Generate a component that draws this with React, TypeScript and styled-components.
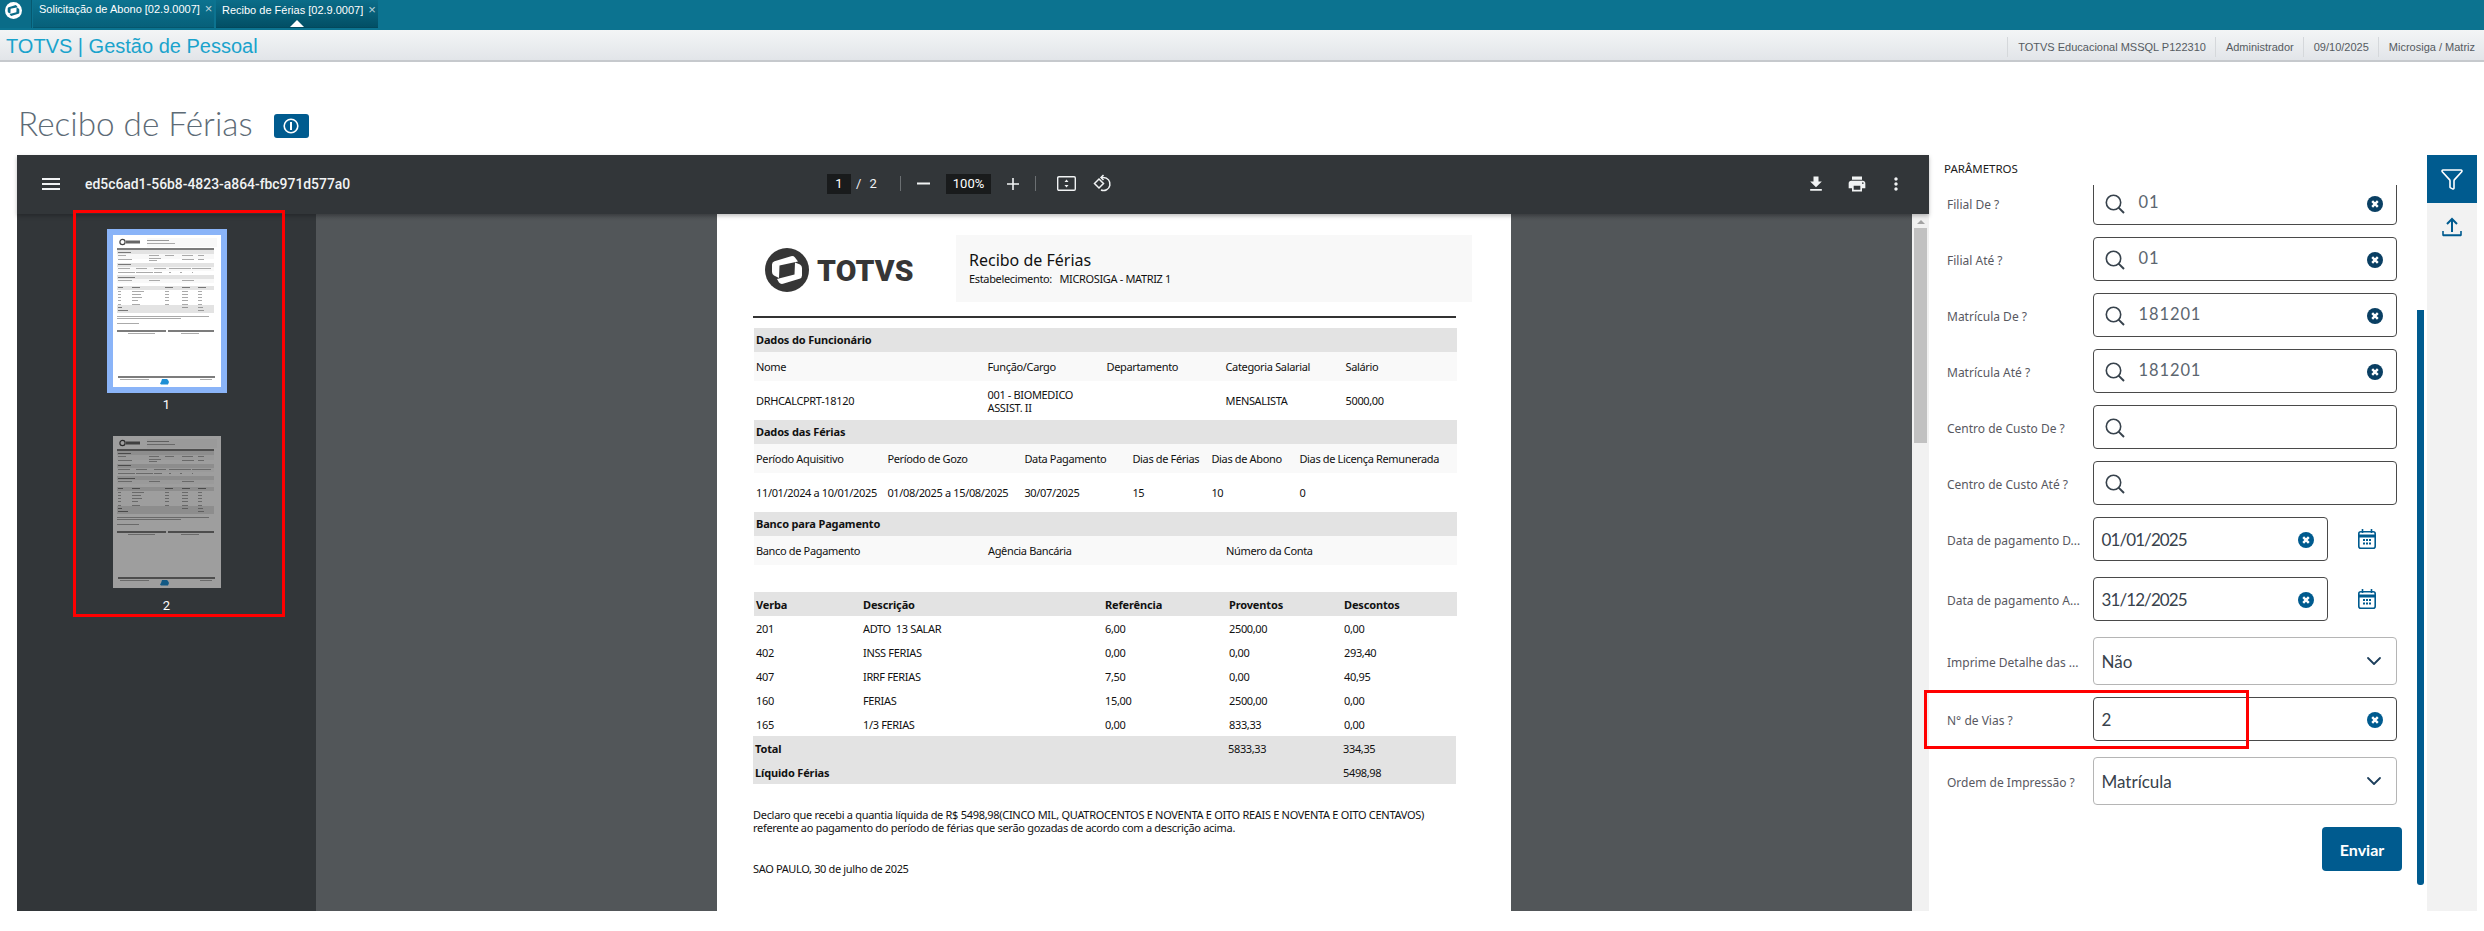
import React from "react";
import styled, { createGlobalStyle } from "styled-components";
import { ChevronDown, Filter } from "lucide-react";

const Global = createGlobalStyle`
  html, body { margin: 0; padding: 0; background: #fff; overflow: hidden; }
  * { box-sizing: border-box; }
  body { font-family: "Liberation Sans", Arial, sans-serif; width: 2484px; height: 931px; }
`;

const Root = styled.div`
  position: relative;
  width: 2484px;
  height: 931px;
  overflow: hidden;
  background: #fff;
`;

const TopBar = styled.div`
  height: 30px;
  background: #0c7390;
  display: flex;
  align-items: flex-start;
`;
const LogoCell = styled.div`
  width: 32px;
  height: 28px;
  display: flex;
  align-items: flex-start;
  padding: 2px 0 0 5px;
  background: #0a6c88;
  border-right: 1px solid #07586f;
  margin-right: 1px;
`;
const Tab = styled.div<{ $active?: boolean }>`
  position: relative;
  height: 28px;
  width: ${(p) => (p.$active ? 162 : 181)}px;
  margin-right: 2px;
  padding: ${(p) => (p.$active ? "3px 0 0 6px" : "2px 0 0 6px")};
  display: flex;
  white-space: nowrap;
  color: #fff;
  font-size: 11px;
  line-height: 14px;
  background: ${(p) =>
    p.$active ? "linear-gradient(#0b6d89, #024f65)" : "linear-gradient(#0c7390, #07607a)"};
  border-bottom: 1px solid ${(p) => (p.$active ? "#02485c" : "#05566d")};
`;
const TabClose = styled.span`
  color: #b9d3db;
  font-size: 13px;
  margin-left: 5px;
  line-height: 13px;
`;
const TabCaret = styled.span`
  position: absolute;
  left: 74px;
  bottom: 0;
  width: 0;
  height: 0;
  border-left: 7px solid transparent;
  border-right: 7px solid transparent;
  border-bottom: 7px solid #fff;
`;

const Header = styled.div`
  height: 32px;
  display: flex;
  justify-content: space-between;
  background: linear-gradient(#f3f5f6, #e2e5e9);
  border-bottom: 2px solid #c6c9cd;
`;
const Brand = styled.div`
  padding-left: 6px;
  font-size: 20px;
  line-height: 32px;
  color: #1aa3cc;
`;
const Meta = styled.div`
  display: flex;
  align-items: stretch;
  padding-top: 7px;
  padding-bottom: 3px;
  height: 30px;
`;
const MetaItem = styled.div`
  padding: 0 9px 0 10px;
  border-left: 1px solid #d5d8db;
  font-size: 11px;
  line-height: 20px;
  color: #555b61;
`;

const TitleRow = styled.div`
  height: 93px;
  display: flex;
  align-items: center;
  padding: 28px 0 0 18px;
`;
const Title = styled.h1`
  margin: 0;
  font-family: Lato, "Liberation Sans", sans-serif;
  font-weight: 300;
  font-size: 33.3px;
  color: #5d6b76;
  line-height: 40px;
`;
const InfoButton = styled.div`
  width: 35px;
  height: 24px;
  margin: 7px 0 0 21px;
  border-radius: 3px;
  background: #005b8f;
  display: flex;
  align-items: center;
  justify-content: center;
`;

const Content = styled.div`
  height: 756px;
  display: flex;
  padding-left: 17px;
`;

const Viewer = styled.div`
  width: 1912px;
  display: flex;
  flex-direction: column;
  background: #525659;
`;
const Toolbar = styled.div`
  position: relative;
  z-index: 2;
  height: 59px;
  padding-bottom: 2px;
  background: #323639;
  color: #f1f3f4;
  display: flex;
  align-items: center;
  font-family: Roboto, sans-serif;
  box-shadow: 0 2px 4px rgba(0, 0, 0, 0.25);
`;
const IconSlot = styled.span<{ $w: number; $ml?: number }>`
  width: ${(p) => p.$w}px;
  margin-left: ${(p) => p.$ml ?? 0}px;
  display: flex;
  justify-content: center;
  align-items: center;
  flex: none;
`;
const FileName = styled.div`
  width: 442px;
  margin-left: 22px;
  margin-right: 300px;
  font-size: 13.9px;
  font-weight: 500;
  flex: none;
`;
const NumberBox = styled.div<{ $w: number; $ml?: number }>`
  width: ${(p) => p.$w}px;
  margin-left: ${(p) => p.$ml ?? 0}px;
  height: 20px;
  flex: none;
  background: #191b1c;
  color: #fff;
  font-size: 13px;
  line-height: 20px;
  text-align: center;
`;
const PageSep = styled.span`
  font-size: 13px;
  width: 49px;
  padding-left: 5px;
  flex: none;
  word-spacing: 5px;
`;
const ToolSep = styled.span<{ $ml: number }>`
  width: 1px;
  height: 15px;
  background: #6b6f72;
  margin-left: ${(p) => p.$ml}px;
  flex: none;
`;

const ViewerBody = styled.div`
  flex: 1;
  display: flex;
  min-height: 0;
`;
const Thumbs = styled.div`
  width: 299px;
  flex: none;
  background: #323639;
  padding-top: 15px;
  display: flex;
  flex-direction: column;
  align-items: center;
`;
const ThumbItem = styled.div`
  display: flex;
  flex-direction: column;
  align-items: center;
  height: 207px;
  color: #fff;
  font-family: Roboto, sans-serif;
  font-size: 13px;
`;
const ThumbFrame = styled.div<{ $selected?: boolean; $dim?: boolean }>`
  width: ${(p) => (p.$selected ? 120 : 108)}px;
  height: ${(p) => (p.$selected ? 164 : 152)}px;
  border: ${(p) => (p.$selected ? "6px solid #8ab4f8" : "none")};
  display: flex;
  filter: ${(p) => (p.$dim ? "brightness(0.62)" : "none")};
`;
const ThumbLabel = styled.div<{ $selected?: boolean }>`
  margin-top: ${(p) => (p.$selected ? 4 : 10)}px;
  line-height: 16px;
`;

const Main = styled.div`
  flex: 1;
  min-width: 0;
  display: flex;
  justify-content: center;
  overflow: hidden;
  background: linear-gradient(#4c5053, #525659 6px);
`;
const Page = styled.div`
  width: 794px;
  flex: none;
  height: 697px;
  background: #fff;
  padding: 21px 0 0 36px;
  font-family: "Noto Sans", Tahoma, sans-serif;
  font-size: 11px;
  letter-spacing: -0.35px;
  color: #111;
  overflow: hidden;
`;
const DocHead = styled.div`
  display: flex;
  height: 67px;
`;
const Logo = styled.div`
  width: 203px;
  flex: none;
  display: flex;
  align-items: center;
  gap: 8px;
  padding: 0 0 0 12px;
  margin-top: 3px;
`;
const LogoText = styled.span`
  font-family: Roboto, sans-serif;
  font-weight: 900;
  font-size: 30px;
  color: #363636;
  letter-spacing: 0.2px;
`;
const DocTitleBox = styled.div`
  width: 516px;
  flex: none;
  background: #f8f8f8;
  padding: 15px 0 0 13px;
`;
const DocTitle = styled.div`
  font-size: 16px;
  letter-spacing: 0;
  line-height: 21px;
`;
const DocSub = styled.div`
  font-size: 11px;
  line-height: 15px;
  white-space: pre;
`;
const Rule = styled.div`
  width: 703px;
  height: 2px;
  background: #333;
  margin-top: 14px;
  margin-bottom: 10px;
`;
const SectionTitle = styled.div`
  width: 703px;
  margin-left: 1px;
  height: 24px;
  background: #e3e3e3;
  font-weight: 700;
  letter-spacing: -0.15px;
  line-height: 24px;
  padding-left: 2px;
`;
const DataRow = styled.div<{ $cols: string; $h: number; $tinted?: boolean }>`
  width: 703px;
  margin-left: 1px;
  height: ${(p) => p.$h}px;
  display: grid;
  grid-template-columns: ${(p) => p.$cols};
  align-items: center;
  background: ${(p) => (p.$tinted ? "#f9f9f9" : "#fff")};
  padding-left: 2px;
  line-height: 13px;
  white-space: pre;
`;
const PayRow = styled(DataRow)<{ $gray?: boolean; $flush?: boolean }>`
  background: ${(p) => (p.$gray ? "#e3e3e3" : "#fff")};
  margin-left: ${(p) => (p.$flush ? 0 : 1)}px;
`;
const Strong = styled.span`
  font-weight: 700;
  letter-spacing: -0.15px;
`;
const Spacer = styled.div<{ $h: number }>`
  height: ${(p) => p.$h}px;
`;
const Paragraph = styled.p`
  margin: 24px 0 0 0;
  line-height: 13px;
  white-space: nowrap;
  letter-spacing: -0.3px;
`;
const Place = styled.p`
  margin: 28px 0 0 0;
  line-height: 13px;
`;

const VScroll = styled.div`
  width: 17px;
  flex: none;
  background: #f1f1f1;
  padding: 0 2px;
`;
const VArrow = styled.div`
  width: 0;
  height: 0;
  margin: 6px auto 4px;
  border-left: 4px solid transparent;
  border-right: 4px solid transparent;
  border-bottom: 4px solid #a3a3a3;
`;
const VThumb = styled.div`
  height: 215px;
  background: #c1c1c1;
`;

const Panel = styled.div`
  position: relative;
  width: 498px;
  flex: none;
  display: flex;
  flex-direction: column;
`;
const PanelTitle = styled.div`
  height: 30px;
  padding: 6px 0 0 15px;
  font-family: "Noto Sans", sans-serif;
  font-size: 11.5px;
  line-height: 16px;
  color: #1c1c1c;
`;
const FormClip = styled.div`
  flex: 1;
  overflow: hidden;
  padding-left: 18px;
`;
const FormList = styled.div`
  margin-top: -4px;
  display: flex;
  flex-direction: column;
`;
const Row = styled.div<{ $mb: number }>`
  display: flex;
  align-items: center;
  margin-bottom: ${(p) => p.$mb}px;
`;
const Label = styled.label`
  width: 145.5px;
  flex: none;
  padding-top: 2px;
  font-family: "Noto Sans", sans-serif;
  font-size: 12px;
  color: #58585f;
  white-space: nowrap;
  overflow: hidden;
`;
const Field = styled.div<{ $w?: number; $h?: number; $light?: boolean }>`
  width: ${(p) => p.$w ?? 304}px;
  height: ${(p) => p.$h ?? 44}px;
  flex: none;
  border: 1px solid ${(p) => (p.$light ? "#b5b5b5" : "#4a4a4a")};
  border-radius: 4px;
  display: flex;
  align-items: center;
  padding: 0 13px 0 8px;
  background: #fff;
`;
const FieldIcon = styled.span`
  width: 20px;
  height: 20px;
  margin: 1px 14px 0 3px;
  flex: none;
  display: flex;
`;
const LookupValue = styled.span`
  flex: 1;
  font-family: Lato, sans-serif;
  font-size: 16.5px;
  letter-spacing: 0.9px;
  color: #5c6670;
  margin-top: -2px;
`;
const Value = styled.span<{ $tight?: boolean }>`
  flex: 1;
  font-family: Lato, sans-serif;
  font-size: 17px;
  letter-spacing: ${(p) => (p.$tight ? "-0.9px" : "0")};
  color: #38424c;
`;
const ClearSlot = styled.span`
  display: flex;
  margin-top: 2px;
`;
const CalendarSlot = styled.span`
  width: 18px;
  height: 20px;
  margin-left: 30px;
  display: flex;
`;
const SubmitRow = styled.div`
  display: flex;
  justify-content: flex-end;
  width: 455px;
  margin-top: 10px;
`;
const Submit = styled.button`
  width: 80px;
  height: 44px;
  border: 0;
  border-radius: 4px;
  background: #005b8f;
  color: #fff;
  font-family: Lato, sans-serif;
  font-weight: 700;
  font-size: 16px;
`;
const PanelScroll = styled.div`
  position: absolute;
  left: 488px;
  top: 155px;
  width: 7px;
  height: 575px;
  background: #005b8f;
  border-radius: 0 0 3px 3px;
`;

const Side = styled.div`
  width: 50px;
  flex: none;
  background: #f2f2f2;
`;
const SideBtn = styled.div<{ $active?: boolean }>`
  height: 48px;
  display: flex;
  align-items: center;
  justify-content: center;
  background: ${(p) => (p.$active ? "#005b8f" : "transparent")};
  color: ${(p) => (p.$active ? "#fff" : "#005b8f")};
`;

const RedBox = styled.div<{ $l: number; $t: number; $w: number; $h: number }>`
  position: absolute;
  left: ${(p) => p.$l}px;
  top: ${(p) => p.$t}px;
  width: ${(p) => p.$w}px;
  height: ${(p) => p.$h}px;
  border: 3px solid #f00;
  pointer-events: none;
  z-index: 5;
`;

/* ---------- drawings ---------- */
const Mat = ({ d, size = 24 }: { d: string; size?: number }) => (
  <svg width={size} height={size} viewBox="0 0 24 24" fill="#f1f3f4">
    <path d={d} />
  </svg>
);

const TotvsMark = ({ size, color, hole }: { size: number; color: string; hole: string }) => (
  <svg width={size} height={size} viewBox="0 0 44 44">
    <circle cx="22" cy="22" r="22" fill={color} />
    <path
      fill={hole}
      d="M7 16.5Q7 14 9.5 13.3L26 8.2Q28.5 7.6 30 9.5L33 13.5 14.5 17.5 14 30 9 27.5Q7 26.3 7 24Z"
    />
    <path
      fill={hole}
      d="M37 27.5Q37 30 34.5 30.7L18 35.8Q15.5 36.4 14 34.5L12 31 29.5 26.5 30 14.5 35 16.5Q37 17.7 37 20Z"
    />
  </svg>
);

const SearchIcon = () => (
  <svg width="20" height="20" viewBox="0 0 20 20" fill="none" stroke="#37424c" strokeWidth="1.6">
    <circle cx="8.5" cy="8.5" r="7.2" />
    <path d="M13.6 13.6 19 19" strokeWidth="2" />
  </svg>
);
const ClearIcon = ({ dark }: { dark?: boolean }) => (
  <ClearSlot>
    <svg width="16" height="16" viewBox="0 0 16 16">
      <circle cx="8" cy="8" r="8" fill={dark ? "#0a3f63" : "#005b8f"} />
      <path d="M5.2 5.2 10.8 10.8M10.8 5.2 5.2 10.8" stroke="#fff" strokeWidth="2.4" />
    </svg>
  </ClearSlot>
);
const CalendarIcon = () => (
  <svg width="18" height="20" viewBox="0 0 18 20" fill="none">
    <rect x="0.8" y="2.8" width="16.4" height="16.4" rx="2" stroke="#005b8f" strokeWidth="1.6" />
    <path d="M1 7h16" stroke="#005b8f" strokeWidth="3" />
    <path d="M4.5 0v4M13.5 0v4" stroke="#005b8f" strokeWidth="1.6" />
    <path
      d="M5 10h2v2H5zM8 10h2v2H8zM11 10h2v2h-2zM5 13.500h2v2H5zM8 13.500h2v2H8zM11 13.500h2v2h-2z"
      fill="#005b8f"
    />
  </svg>
);
const UploadIcon = () => (
  <svg width="20" height="20" viewBox="0 0 20 20" fill="none" stroke="#005b8f" strokeWidth="2">
    <path d="M1 14v4h18v-4M1 18.500h18" strokeWidth="1.6" />
    <path d="M10 15V2M5 7l5-5 5 5" />
  </svg>
);

type Bar = [number, number, number, number, string];
const barRows: Bar[] = [
  [34, 3, 70, 9, "#f8f8f8"],
  [34, 5, 22, 1, "#999"],
  [34, 8, 28, 1, "#aaa"],
  [13, 5.500, 14, 3, "#666"],
  [4, 13, 97, 2, "#7c7c7c"],
  [4, 15, 97, 4, "#e3e3e3"],
  [5, 17, 13, 1, "#777"],
  [4, 19, 97, 5, "#f8f8f8"],
  [5, 20, 8, 1, "#aaa"], [36, 20, 10, 1, "#aaa"], [52, 20, 9, 1, "#aaa"], [69, 20, 11, 1, "#aaa"], [85, 20, 6, 1, "#aaa"],
  [5, 24, 14, 1, "#aaa"], [36, 23, 12, 1, "#aaa"], [36, 25, 8, 1, "#aaa"], [69, 24, 12, 1, "#aaa"], [85, 24, 6, 1, "#aaa"],
  [4, 28, 97, 4, "#e3e3e3"],
  [5, 29, 13, 1, "#777"],
  [4, 32, 97, 4, "#f8f8f8"],
  [5, 33, 12, 1, "#aaa"], [23, 33, 11, 1, "#aaa"], [41, 33, 12, 1, "#aaa"], [56, 33, 11, 1, "#aaa"], [67, 33, 11, 1, "#aaa"], [79, 33, 19, 1, "#aaa"],
  [5, 37, 17, 1, "#aaa"], [23, 37, 17, 1, "#aaa"], [41, 37, 8, 1, "#aaa"], [56, 37, 2, 1, "#aaa"], [67, 37, 2, 1, "#aaa"], [79, 37, 1, 1, "#aaa"],
  [4, 40, 97, 4, "#e3e3e3"],
  [5, 42, 17, 1, "#777"],
  [4, 44, 97, 4, "#f8f8f8"],
  [5, 45, 14, 1, "#aaa"], [36, 45, 11, 1, "#aaa"], [69, 45, 12, 1, "#aaa"],
  [4, 51, 97, 4, "#e3e3e3"],
  [5, 52, 5, 1, "#777"], [19, 52, 8, 1, "#777"], [52, 52, 8, 1, "#777"], [69, 52, 8, 1, "#777"], [85, 52, 8, 1, "#777"],
  ...[56, 59, 62, 65, 69].flatMap((y, i): Bar[] => [
    [5, y, 3, 1, "#aaa"],
    [19, y, [12, 9, 10, 6, 8][i], 1, "#aaa"],
    [52, y, 4, 1, "#aaa"],
    [69, y, 6, 1, "#aaa"],
    [85, y, 4, 1, "#aaa"],
  ]),
  [4, 70, 97, 8, "#e3e3e3"],
  [5, 72, 4, 1, "#777"], [69, 72, 6, 1, "#999"], [85, 72, 5, 1, "#999"], [5, 75, 10, 1, "#777"], [85, 75, 6, 1, "#999"],
  [4, 81, 92, 1, "#aaa"], [4, 83, 64, 1, "#aaa"], [4, 88, 22, 1, "#aaa"],
  [4, 95, 49, 2, "#7c7c7c"], [55, 95, 46, 2, "#7c7c7c"],
  [15, 98, 27, 1, "#aaa"], [68, 98, 18, 1, "#aaa"],
  [5, 141, 97, 2, "#7c7c7c"],
  [7, 144, 29, 1, "#aaa"], [87, 144, 12, 1, "#aaa"],
];

const MiniPage = () => (
  <svg width="108" height="152" viewBox="0 0 108 152">
    <rect width="108" height="152" fill="#fff" />
    {barRows.map(([x, y, w, h, c], i) => (
      <rect key={i} x={x} y={y} width={w} height={h} fill={c} />
    ))}
    <circle cx="9.500" cy="7" r="2.600" fill="none" stroke="#444" strokeWidth="1.200" />
    <path d="M49 144h5l1 1 1 2-1 2.500h-7l-1-1 1-1.500z" fill="#1e8fd5" />
  </svg>
);

/* ---------- data ---------- */
const empCols = "231.5px 119px 119px 120px 1fr";
const ferCols = "131.4px 137px 108px 79px 88px 1fr";
const bankCols = "232px 238px 1fr";
const payCols = "107px 242px 124px 115px 1fr";

const pay = [
  ["201", "ADTO  13 SALAR", "6,00", "2500,00", "0,00"],
  ["402", "INSS FERIAS", "0,00", "0,00", "293,40"],
  ["407", "IRRF FERIAS", "7,50", "0,00", "40,95"],
  ["160", "FERIAS", "15,00", "2500,00", "0,00"],
  ["165", "1/3 FERIAS", "0,00", "833,33", "0,00"],
];

type FieldDef =
  | { kind: "lookup"; label: string; value?: string; mb: number }
  | { kind: "date"; label: string; value: string; mb: number }
  | { kind: "select"; label: string; value: string; mb: number }
  | { kind: "text"; label: string; value: string; mb: number };

const fields: FieldDef[] = [
  { kind: "lookup", label: "Filial De ?", value: "01", mb: 12 },
  { kind: "lookup", label: "Filial Até ?", value: "01", mb: 12 },
  { kind: "lookup", label: "Matrícula De ?", value: "181201", mb: 12 },
  { kind: "lookup", label: "Matrícula Até ?", value: "181201", mb: 12 },
  { kind: "lookup", label: "Centro de Custo De ?", mb: 12 },
  { kind: "lookup", label: "Centro de Custo Até ?", mb: 12 },
  { kind: "date", label: "Data de pagamento D...", value: "01/01/2025", mb: 16 },
  { kind: "date", label: "Data de pagamento A...", value: "31/12/2025", mb: 16 },
  { kind: "select", label: "Imprime Detalhe das ...", value: "Não", mb: 12 },
  { kind: "text", label: "N° de Vias ?", value: "2", mb: 16 },
  { kind: "select", label: "Ordem de Impressão ?", value: "Matrícula", mb: 12 },
];

const renderField = (f: FieldDef) => {
  if (f.kind === "lookup") {
    return (
      <Field>
        <FieldIcon><SearchIcon /></FieldIcon>
        <LookupValue>{f.value}</LookupValue>
        {f.value && <ClearIcon dark />}
      </Field>
    );
  }
  if (f.kind === "date") {
    return (
      <>
        <Field $w={235}>
          <Value $tight>{f.value}</Value>
          <ClearIcon />
        </Field>
        <CalendarSlot><CalendarIcon /></CalendarSlot>
      </>
    );
  }
  if (f.kind === "select") {
    return (
      <Field $h={48} $light>
        <Value>{f.value}</Value>
        <ChevronDown size={24} color="#1d3f5c" strokeWidth={1.8} style={{ marginRight: -3 }} />
      </Field>
    );
  }
  return (
    <Field>
      <Value>{f.value}</Value>
      <ClearIcon />
    </Field>
  );
};

export default function App() {
  return (
    <Root>
      <Global />
      <TopBar>
        <LogoCell><TotvsMark size={17} color="#fff" hole="#0a6c88" /></LogoCell>
        <Tab>Solicitação de Abono [02.9.0007]<TabClose>×</TabClose></Tab>
        <Tab $active>Recibo de Férias [02.9.0007]<TabClose>×</TabClose><TabCaret /></Tab>
      </TopBar>
      <Header>
        <Brand>TOTVS | Gestão de Pessoal</Brand>
        <Meta>
          <MetaItem>TOTVS Educacional MSSQL P122310</MetaItem>
          <MetaItem>Administrador</MetaItem>
          <MetaItem>09/10/2025</MetaItem>
          <MetaItem>Microsiga / Matriz</MetaItem>
        </Meta>
      </Header>
      <TitleRow>
        <Title>Recibo de Férias</Title>
        <InfoButton>
          <svg width="16" height="16" viewBox="0 0 16 16">
            <circle cx="8" cy="8" r="6.8" fill="none" stroke="#fff" strokeWidth="1.6" />
            <path d="M8 4v8" stroke="#fff" strokeWidth="2" />
          </svg>
        </InfoButton>
      </TitleRow>
      <Content>
        <Viewer>
          <Toolbar>
            <IconSlot $w={24} $ml={22}>
              <Mat size={24} d="M3 18h18v-2H3v2zm0-5h18v-2H3v2zm0-7v2h18V6H3z" />
            </IconSlot>
            <FileName>ed5c6ad1-56b8-4823-a864-fbc971d577a0</FileName>
            <NumberBox $w={24}>1</NumberBox>
            <PageSep>/ 2</PageSep>
            <ToolSep $ml={0} />
            <IconSlot $w={13} $ml={16}>
              <svg width="13" height="3" viewBox="0 0 13 3"><rect width="13" height="2" y="0.500" fill="#f1f3f4" /></svg>
            </IconSlot>
            <NumberBox $w={45} $ml={16}>100%</NumberBox>
            <IconSlot $w={12} $ml={16}>
              <svg width="12" height="12" viewBox="0 0 12 12"><path d="M0 6h12M6 0v12" stroke="#f1f3f4" strokeWidth="1.6" /></svg>
            </IconSlot>
            <ToolSep $ml={16} />
            <IconSlot $w={19} $ml={21}>
              <svg width="19" height="15" viewBox="0 0 19 15">
                <rect x="0.700" y="0.700" width="17.600" height="13.600" rx="1.200" fill="none" stroke="#f1f3f4" strokeWidth="1.400" />
                <path d="M9.500 3.500 7.500 6h4zM9.500 11.500 7.500 9h4z" fill="#f1f3f4" />
              </svg>
            </IconSlot>
            <IconSlot $w={19} $ml={17}>
              <svg width="19" height="19" viewBox="0 0 19 19" fill="none" stroke="#f1f3f4" strokeWidth="1.500">
                <path d="M1.500 9.500 6 5l4.500 4.500L6 14z" />
                <path d="M8 3.500h2.500a6.500 6.500 0 1 1-2.500 12.500" />
                <path d="M10.500 1 8 3.500 10.500 6" />
              </svg>
            </IconSlot>
            <IconSlot $w={20} $ml={694}>
              <Mat size={20} d="M19 9h-4V3H9v6H5l7 7 7-7zM5 18v2h14v-2H5z" />
            </IconSlot>
            <IconSlot $w={20} $ml={21}>
              <Mat size={20} d="M19 8H5c-1.660 0-3 1.340-3 3v6h4v4h12v-4h4v-6c0-1.660-1.340-3-3-3zm-3 11H8v-5h8v5zm3-7c-.550 0-1-.450-1-1s.450-1 1-1 1 .450 1 1-.450 1-1 1zm-1-9H6v4h12V3z" />
            </IconSlot>
            <IconSlot $w={20} $ml={19}>
              <Mat size={20} d="M12 8c1.100 0 2-.900 2-2s-.900-2-2-2-2 .900-2 2 .900 2 2 2zm0 2c-1.100 0-2 .900-2 2s.900 2 2 2 2-.900 2-2-.900-2-2-2zm0 6c-1.100 0-2 .900-2 2s.900 2 2 2 2-.900 2-2-.900-2-2-2z" />
            </IconSlot>
          </Toolbar>
          <ViewerBody>
            <Thumbs>
              <ThumbItem>
                <ThumbFrame $selected><MiniPage /></ThumbFrame>
                <ThumbLabel $selected>1</ThumbLabel>
              </ThumbItem>
              <ThumbItem>
                <ThumbFrame $dim><MiniPage /></ThumbFrame>
                <ThumbLabel>2</ThumbLabel>
              </ThumbItem>
            </Thumbs>
            <Main>
              <Page>
                <DocHead>
                  <Logo>
                    <TotvsMark size={44} color="#363636" hole="#fff" />
                    <LogoText>TOTVS</LogoText>
                  </Logo>
                  <DocTitleBox>
                    <DocTitle>Recibo de Férias</DocTitle>
                    <DocSub>{"Estabelecimento:   MICROSIGA - MATRIZ 1"}</DocSub>
                  </DocTitleBox>
                </DocHead>
                <Rule />
                <SectionTitle>Dados do Funcionário</SectionTitle>
                <DataRow $cols={empCols} $h={29} $tinted>
                  <span>Nome</span><span>Função/Cargo</span><span>Departamento</span><span>Categoria Salarial</span><span>Salário</span>
                </DataRow>
                <DataRow $cols={empCols} $h={39}>
                  <span>DRHCALCPRT-18120</span><span>001 - BIOMEDICO<br />ASSIST. II</span><span /><span>MENSALISTA</span><span>5000,00</span>
                </DataRow>
                <SectionTitle>Dados das Férias</SectionTitle>
                <DataRow $cols={ferCols} $h={29} $tinted>
                  <span>Período Aquisitivo</span><span>Período de Gozo</span><span>Data Pagamento</span><span>Dias de Férias</span><span>Dias de Abono</span><span>Dias de Licença Remunerada</span>
                </DataRow>
                <DataRow $cols={ferCols} $h={39}>
                  <span>11/01/2024 a 10/01/2025</span><span>01/08/2025 a 15/08/2025</span><span>30/07/2025</span><span>15</span><span>10</span><span>0</span>
                </DataRow>
                <SectionTitle>Banco para Pagamento</SectionTitle>
                <DataRow $cols={bankCols} $h={29} $tinted>
                  <span>Banco de Pagamento</span><span>Agência Bancária</span><span>Número da Conta</span>
                </DataRow>
                <Spacer $h={27} />
                <PayRow $cols={payCols} $h={24} $gray>
                  <Strong>Verba</Strong><Strong>Descrição</Strong><Strong>Referência</Strong><Strong>Proventos</Strong><Strong>Descontos</Strong>
                </PayRow>
                {pay.map((r) => (
                  <PayRow key={r[0]} $cols={payCols} $h={24}>
                    {r.map((c, i) => <span key={i}>{c}</span>)}
                  </PayRow>
                ))}
                <PayRow $cols={payCols} $h={24} $gray $flush>
                  <Strong>Total</Strong><span /><span /><span>5833,33</span><span>334,35</span>
                </PayRow>
                <PayRow $cols={payCols} $h={24} $gray $flush>
                  <Strong>Líquido Férias</Strong><span /><span /><span /><span>5498,98</span>
                </PayRow>
                <Paragraph>
                  Declaro que recebi a quantia líquida de R$ 5498,98(CINCO MIL, QUATROCENTOS E NOVENTA E OITO REAIS E NOVENTA E OITO CENTAVOS)
                  <br />
                  referente ao pagamento do período de férias que serão gozadas de acordo com a descrição acima.
                </Paragraph>
                <Place>SAO PAULO, 30 de julho de 2025</Place>
              </Page>
            </Main>
            <VScroll>
              <VArrow />
              <VThumb />
            </VScroll>
          </ViewerBody>
        </Viewer>
        <Panel>
          <PanelTitle>PARÂMETROS</PanelTitle>
          <FormClip>
            <FormList>
              {fields.map((f) => (
                <Row key={f.label} $mb={f.mb}>
                  <Label>{f.label}</Label>
                  {renderField(f)}
                </Row>
              ))}
              <SubmitRow><Submit>Enviar</Submit></SubmitRow>
            </FormList>
          </FormClip>
          <PanelScroll />
        </Panel>
        <Side>
          <SideBtn $active><Filter size={24} strokeWidth={1.6} /></SideBtn>
          <SideBtn><UploadIcon /></SideBtn>
        </Side>
      </Content>
      <RedBox $l={73} $t={210} $w={212} $h={407} />
      <RedBox $l={1924} $t={690} $w={325} $h={59} />
    </Root>
  );
}
